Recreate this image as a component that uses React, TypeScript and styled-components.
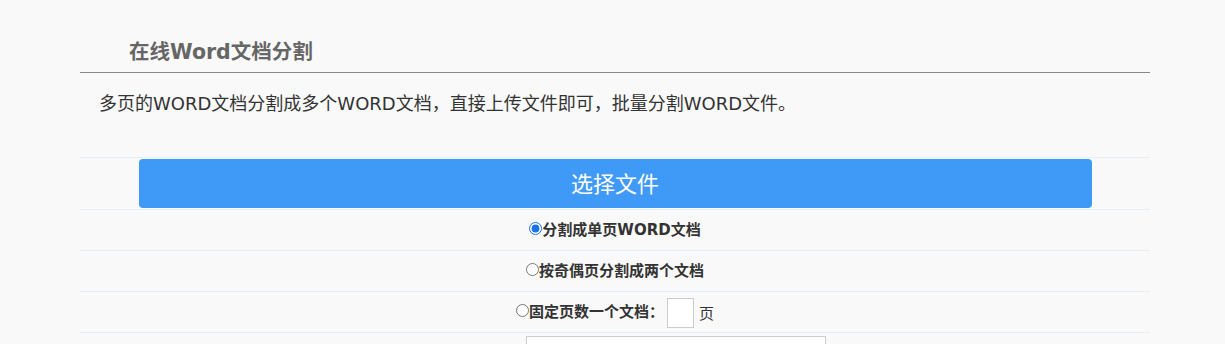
import styled, { createGlobalStyle } from "styled-components"
import type { FC } from "react"

const GlobalStyle = createGlobalStyle`
  html, body {
    margin: 0;
    padding: 0;
    background: #f9f9f9;
    font-family: "DejaVu Sans", "Noto Sans CJK SC", sans-serif;
    color: #333;
  }
`

const Page = styled.div`
  width: 1070px;
  margin-left: 80px;
  padding-top: 39px;
`

const Title = styled.h2`
  margin: 0;
  padding: 0 0 7px 49px;
  font-size: 20.5px;
  line-height: 26px;
  font-weight: 700;
  color: #666;
  border-bottom: 1px solid #888;
`

const Intro = styled.p`
  margin: 0;
  padding: 19px 19px 0;
  height: 65px;
  font-size: 18px;
  line-height: 24px;
  color: #333;
`

const Table = styled.div`
  display: flex;
  flex-direction: column;
`

const Row = styled.div<{ $tall?: boolean }>`
  display: flex;
  align-items: center;
  justify-content: center;
  height: ${p => (p.$tall ? "51px" : "40px")};
  border-top: 1px solid #e6eef6;
  font-size: 15px;
  font-weight: 700;
  color: #333;
`

const UploadButton = styled.button`
  width: 953px;
  height: 49px;
  margin-top: -1px;
  padding: 0 0 2px;
  border: none;
  border-radius: 4px;
  background: #3f9af7;
  color: #fff;
  font-family: "Noto Sans CJK SC", sans-serif;
  font-size: 22px;
  cursor: pointer;
`

const Option = styled.label`
  display: flex;
  align-items: center;
  white-space: nowrap;
  margin-top: -4px;
`

const Radio = styled.input`
  width: 13px;
  height: 13px;
  margin: 0;
  accent-color: #1a73e8;
`

const PageInput = styled.input`
  box-sizing: border-box;
  width: 27px;
  height: 30px;
  margin: 2px 0 0 3px;
  border: 1px solid #ccc;
  background: #fff;
`

const Unit = styled.span`
  margin-left: 5px;
  font-weight: 400;
  font-size: 15px;
`

const RangeRow = styled.div`
  display: flex;
  align-items: flex-start;
  height: 40px;
  padding: 3px 0 0 322px;
  border-top: 1px solid #e6eef6;
  font-size: 15px;
  font-weight: 700;
`

const RangeLabel = styled.label`
  display: flex;
  align-items: center;
  width: 124px;
  padding-top: 9px;
  white-space: nowrap;
  overflow: hidden;
`

const RangeInput = styled.input`
  box-sizing: border-box;
  width: 300px;
  height: 30px;
  border: 1px solid #ccc;
  background: #fff;
`

const options = ["分割成单页WORD文档", "按奇偶页分割成两个文档"]

const App: FC = () => {
  return (
    <>
      <GlobalStyle />
      <Page>
        <Title>在线Word文档分割</Title>
        <Intro>多页的WORD文档分割成多个WORD文档，直接上传文件即可，批量分割WORD文件。</Intro>
        <Table>
          <Row $tall>
            <UploadButton>选择文件</UploadButton>
          </Row>
          {options.map((text, i) => (
            <Row key={text}>
              <Option>
                <Radio type="radio" name="mode" defaultChecked={i === 0} />
                {text}
              </Option>
            </Row>
          ))}
          <Row>
            <Option>
              <Radio type="radio" name="mode" />
              固定页数一个文档：
            </Option>
            <PageInput type="text" />
            <Unit>页</Unit>
          </Row>
          <RangeRow>
            <RangeLabel>
              <Radio type="radio" name="mode" />
              指定页码：
            </RangeLabel>
            <RangeInput type="text" />
          </RangeRow>
        </Table>
      </Page>
    </>
  )
}

export default App
